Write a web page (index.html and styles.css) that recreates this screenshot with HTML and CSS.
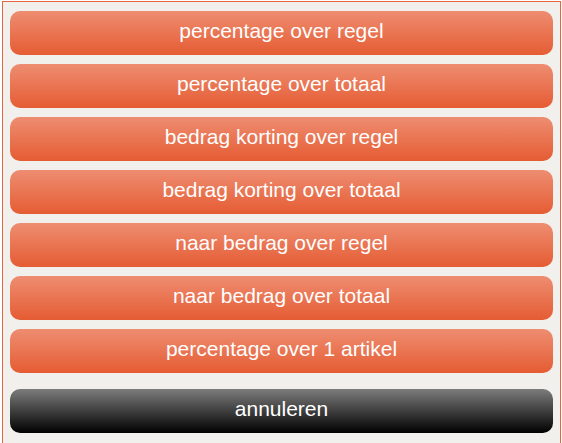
FILE: index.html
```html
<!DOCTYPE html>
<html lang="nl">
<head>
    <meta charset="UTF-8">
    <title>Korting</title>
    <link rel="stylesheet" href="styles.css">
</head>
<body>
    <div class="dialog">
        <div class="btn">percentage over regel</div>
        <div class="btn">percentage over totaal</div>
        <div class="btn">bedrag korting over regel</div>
        <div class="btn">bedrag korting over totaal</div>
        <div class="btn">naar bedrag over regel</div>
        <div class="btn">naar bedrag over totaal</div>
        <div class="btn">percentage over 1 artikel</div>
        <div class="btn cancel">annuleren</div>
    </div>
</body>
</html>
```
FILE: styles.css
```css
body, html, div {
    margin: 0;
    padding: 0;
}

body {
    background: #ffffff;
    font-family: "Liberation Sans", Arial, sans-serif;
    padding: 1px 0 0 2px;
}

.dialog {
    width: 543px;
    height: 429px;
    padding: 9px 7px 6px 7px;
    border: 1px solid #e8653f;
    background: #f2f0ec;
    display: flex;
    flex-direction: column;
    gap: 9px;
}

.btn {
    height: 40px;
    line-height: 40px;
    padding-bottom: 4px;
    border-radius: 10px;
    background: linear-gradient(to bottom, #ee8d71, #e55c33);
    color: #ffffff;
    font-size: 21px;
    text-align: center;
    cursor: pointer;
}

.cancel {
    margin-top: 7px;
    background: linear-gradient(to bottom, #7c7c7c, #000000);
}
```
